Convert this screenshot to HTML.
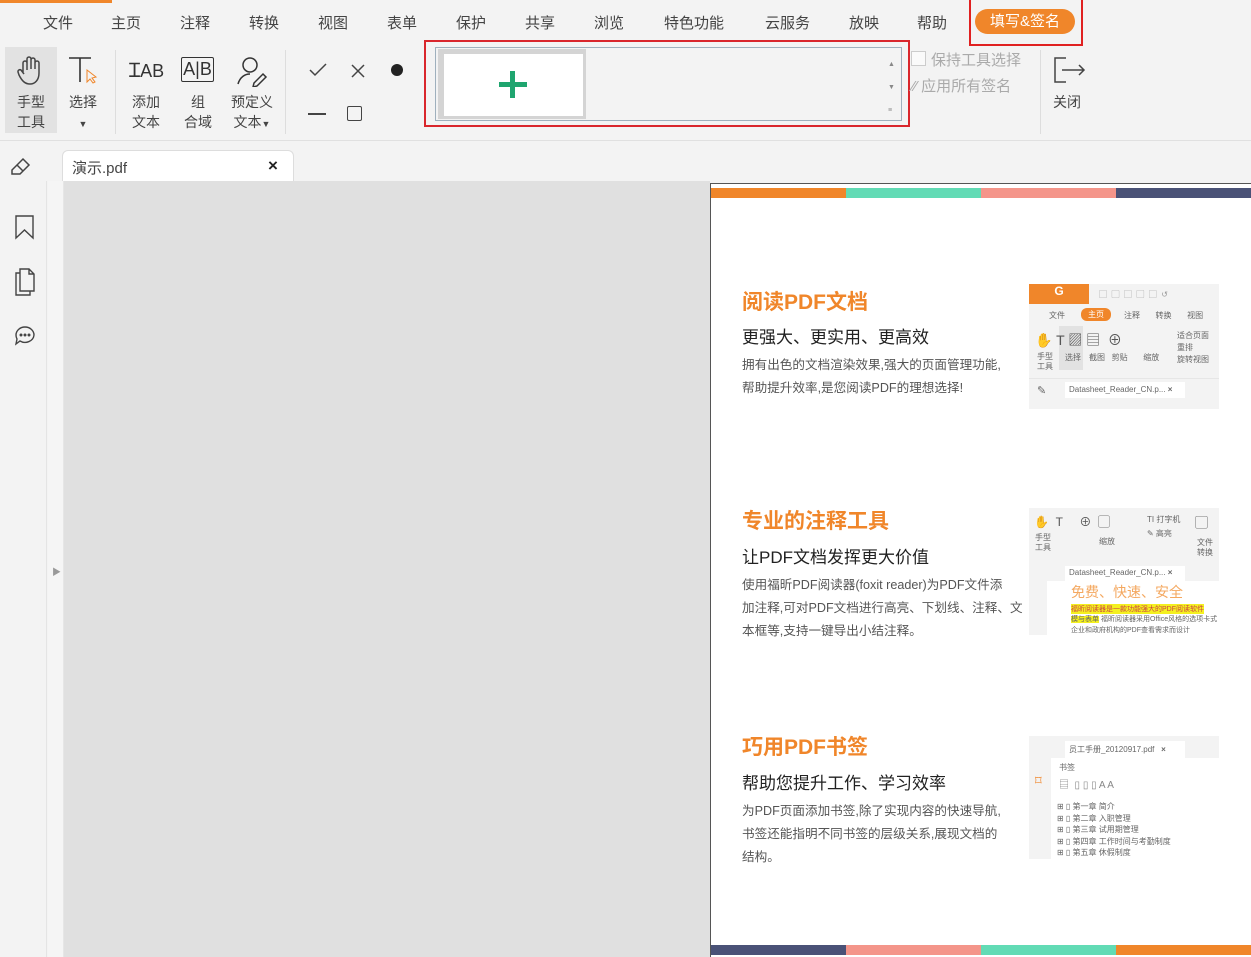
<!DOCTYPE html>
<html><head><meta charset="utf-8"><style>
*{margin:0;padding:0;box-sizing:border-box}
body{width:1251px;height:957px;overflow:hidden;background:#f3f3f3;font-family:"Liberation Sans","Noto Sans CJK SC",sans-serif;color:#333;position:relative}
.a{position:absolute}
.menu span{position:absolute;top:12px;font-size:15px;color:#444}
.lbl{position:absolute;font-size:14px;color:#444;text-align:center;line-height:20px}
.t{font-size:12.6px;color:#555;line-height:23px;white-space:nowrap}
.h{font-size:21px;font-weight:bold;color:#f0862a}
.s{font-size:17px;color:#222}
.th{position:absolute;background:#f3f3f3;font-size:8px;color:#666;overflow:hidden}
</style></head><body>
<div class="a" style="left:0;top:0;width:112px;height:3px;background:#f0862a"></div>
<div class="menu">
<span style="left:43px">文件</span><span style="left:111px">主页</span><span style="left:180px">注释</span><span style="left:249px">转换</span><span style="left:318px">视图</span><span style="left:387px">表单</span><span style="left:456px">保护</span><span style="left:525px">共享</span><span style="left:594px">浏览</span><span style="left:664px">特色功能</span><span style="left:765px">云服务</span><span style="left:849px">放映</span><span style="left:917px">帮助</span>
</div>
<div class="a" style="left:969px;top:0;width:114px;height:46px;border:2px solid #e02020;border-top:none"></div>
<div class="a" style="left:975px;top:9px;width:100px;height:25px;background:#f0862a;border-radius:13px;color:#fff;font-size:15px;text-align:center;line-height:25px">填写&amp;签名</div>
<!-- toolbar -->
<div class="a" style="left:5px;top:47px;width:52px;height:86px;background:#e2e2e2"></div>
<svg class="a" style="left:14px;top:54px" width="34" height="34" viewBox="0 0 34 34" fill="none" stroke="#444" stroke-width="1.5"><path d="M9 18V9a2 2 0 014 0v7M13 14V5a2 2 0 014 0v10M17 14V6a2 2 0 014 0v9M21 15V9a2 2 0 014 0v10c0 7-4 11-9 11s-8-3-11-9l-1-3a2 2 0 013-2l3 4"/></svg>
<div class="lbl" style="left:10px;top:92px;width:42px">手型<br>工具</div>
<svg class="a" style="left:66px;top:54px" width="34" height="34" fill="none" stroke="#333" stroke-width="1.6"><path d="M3 4h22M14 4v24"/><path d="M21 16l0 12 3-3 3 4 2-1-3-4 4-1z" stroke="#f0862a" stroke-width="1"/></svg>
<div class="lbl" style="left:62px;top:92px;width:42px">选择<br><span style="font-size:9px">▼</span></div>
<div class="a" style="left:115px;top:50px;width:1px;height:84px;background:#ddd"></div>
<div class="a" style="left:129px;top:56px;font-size:20px;color:#333">Ɪ<span style="font-size:18px">AB</span></div>
<div class="lbl" style="left:126px;top:92px;width:40px">添加<br>文本</div>
<div class="a" style="left:181px;top:57px;width:33px;height:25px;border:1.5px solid #333;border-radius:2px;font-size:18px;line-height:22px;text-align:center;color:#333">A|B</div>
<div class="lbl" style="left:178px;top:92px;width:40px">组<br>合域</div>
<svg class="a" style="left:236px;top:55px" width="36" height="32" fill="none" stroke="#333" stroke-width="1.5"><circle cx="14" cy="10" r="7"/><path d="M2 29c2-7 7-10 12-10M18 28l9-9 3 3-9 9-4 1z"/></svg>
<div class="lbl" style="left:228px;top:92px;width:48px">预定义<br>文本<span style="font-size:9px">▼</span></div>
<div class="a" style="left:285px;top:50px;width:1px;height:84px;background:#ddd"></div>
<svg class="a" style="left:308px;top:62px" width="20" height="16" fill="none" stroke="#444" stroke-width="1.5"><path d="M2 8l5 5L18 2"/></svg>
<svg class="a" style="left:350px;top:63px" width="16" height="16" fill="none" stroke="#444" stroke-width="1.5"><path d="M2 2l12 12M14 2L2 14"/></svg>
<div class="a" style="left:391px;top:64px;width:12px;height:12px;border-radius:6px;background:#222"></div>
<div class="a" style="left:308px;top:113px;width:18px;height:1.5px;background:#444"></div>
<div class="a" style="left:347px;top:106px;width:15px;height:15px;border:1.5px solid #444;border-radius:2px"></div>
<div class="a" style="left:424px;top:40px;width:486px;height:87px;border:2px solid #d9262c"></div>
<div class="a" style="left:435px;top:47px;width:467px;height:74px;border:1px solid #9fb0bd;background:#f3f3f3"></div>
<div class="a" style="left:438px;top:49px;width:148px;height:70px;background:#d4d4d4"></div>
<div class="a" style="left:444px;top:54px;width:139px;height:62px;background:#fff"></div>
<div class="a" style="left:499px;top:82px;width:28px;height:5px;background:#1fa56f"></div>
<div class="a" style="left:510px;top:71px;width:5px;height:27px;background:#1fa56f"></div>
<div class="a" style="left:888px;top:53px;font-size:7px;color:#888;line-height:23px">▲<br>▼<br>≡</div>
<div class="a" style="left:911px;top:51px;width:15px;height:15px;border:1px solid #ccc;background:#fafafa"></div>
<div class="a" style="left:931px;top:49px;font-size:15px;color:#aaa">保持工具选择</div>
<div class="a" style="left:912px;top:75px;font-size:15px;color:#aaa">⁄⁄ 应用所有签名</div>
<div class="a" style="left:1040px;top:50px;width:1px;height:84px;background:#ddd"></div>
<svg class="a" style="left:1052px;top:55px" width="34" height="30" fill="none" stroke="#444" stroke-width="1.5"><path d="M14 3H3v24h11M10 15h22M27 10l5 5-5 5"/></svg>
<div class="lbl" style="left:1046px;top:92px;width:42px">关闭</div>
<div class="a" style="left:0;top:140px;width:1251px;height:1px;background:#e0e0e0"></div>
<!-- tab row -->
<svg class="a" style="left:9px;top:155px" width="24" height="22" fill="none" stroke="#444" stroke-width="1.5"><path d="M3 15L14 4l6 6-9 9H3zM8 10l6 6"/></svg>
<div class="a" style="left:62px;top:150px;width:232px;height:32px;background:#fff;border:1px solid #ddd;border-bottom:none;border-radius:6px 6px 0 0"></div>
<div class="a" style="left:72px;top:157px;font-size:15px;color:#444">演示.pdf</div>
<div class="a" style="left:268px;top:156px;font-size:17px;color:#222;font-weight:bold">×</div>
<!-- left -->
<div class="a" style="left:0;top:181px;width:47px;height:776px;background:#f3f3f3;border-right:1px solid #e4e4e4"></div>
<div class="a" style="left:48px;top:181px;width:16px;height:776px;background:#f5f5f5;border-right:1px solid #e6e6e6"></div>
<div class="a" style="left:52px;top:565px;font-size:9px;color:#999">▶</div>
<svg class="a" style="left:13px;top:213px" width="24" height="150" fill="none" stroke="#444" stroke-width="1.4"><path d="M3 3h17v22l-8.5-8-8.5 8z"/><path d="M7 56h9l5 5v17H7zM16 56v5h5M7 60H3v22h14v-4"/><path d="M3 122a9 8 0 0118 0 9 8 0 01-14 6l-4 3 1-5a8 8 0 01-1-4z"/><circle cx="8" cy="122" r=".8" fill="#444"/><circle cx="12" cy="122" r=".8" fill="#444"/><circle cx="16" cy="122" r=".8" fill="#444"/></svg>
<div class="a" style="left:64px;top:181px;width:646px;height:776px;background:#e0e0e0"></div>
<!-- page -->
<div class="a" style="left:710px;top:183px;width:541px;height:774px;background:#fff;border-left:1px solid #555;border-top:1px solid #555"></div>
<div class="a" style="left:711px;top:188px;width:135px;height:10px;background:#f0862a"></div>
<div class="a" style="left:846px;top:188px;width:135px;height:10px;background:#62dbb5"></div>
<div class="a" style="left:981px;top:188px;width:135px;height:10px;background:#f4958a"></div>
<div class="a" style="left:1116px;top:188px;width:135px;height:10px;background:#4a5277"></div>
<div class="a" style="left:711px;top:945px;width:135px;height:10px;background:#4a5277"></div>
<div class="a" style="left:846px;top:945px;width:135px;height:10px;background:#f4958a"></div>
<div class="a" style="left:981px;top:945px;width:135px;height:10px;background:#62dbb5"></div>
<div class="a" style="left:1116px;top:945px;width:135px;height:10px;background:#f0862a"></div>

<div class="a h" style="left:742px;top:286px">阅读PDF文档</div>
<div class="a s" style="left:742px;top:323px">更强大、更实用、更高效</div>
<div class="a t" style="left:742px;top:354px">拥有出色的文档渲染效果,强大的页面管理功能,<br>帮助提升效率,是您阅读PDF的理想选择!</div>

<div class="a h" style="left:742px;top:505px">专业的注释工具</div>
<div class="a s" style="left:742px;top:543px">让PDF文档发挥更大价值</div>
<div class="a t" style="left:742px;top:574px">使用福昕PDF阅读器(foxit reader)为PDF文件添<br>加注释,可对PDF文档进行高亮、下划线、注释、文<br>本框等,支持一键导出小结注释。</div>

<div class="a h" style="left:742px;top:731px">巧用PDF书签</div>
<div class="a s" style="left:742px;top:769px">帮助您提升工作、学习效率</div>
<div class="a t" style="left:742px;top:800px">为PDF页面添加书签,除了实现内容的快速导航,<br>书签还能指明不同书签的层级关系,展现文档的<br>结构。</div>

<!-- thumb 1 -->
<div class="th" style="left:1029px;top:284px;width:190px;height:125px">
<div class="a" style="left:0;top:0;width:60px;height:20px;background:#f0862a;color:#fff;text-align:center;font-weight:bold;font-size:12px">G</div>
<div class="a" style="left:70px;top:5px;color:#999">▢ &nbsp;▢ &nbsp;▢ &nbsp;▢ &nbsp;▢ &nbsp;↺</div>
<div class="a" style="left:20px;top:26px">文件</div>
<div class="a" style="left:52px;top:24px;background:#f0862a;color:#fff;border-radius:6px;padding:1px 7px">主页</div>
<div class="a" style="left:95px;top:26px">注释 &nbsp; &nbsp; &nbsp; 转换 &nbsp; &nbsp; &nbsp; 视图</div>
<div class="a" style="left:30px;top:42px;width:24px;height:44px;background:#e2e2e2"></div>
<div class="a" style="left:6px;top:46px;font-size:14px;color:#555">✋ T ▨ ▤ &nbsp;⊕</div>
<div class="a" style="left:8px;top:68px;line-height:10px">手型<br>工具</div>
<div class="a" style="left:36px;top:68px">选择</div>
<div class="a" style="left:60px;top:68px">截图 &nbsp; 剪贴 &nbsp; &nbsp; &nbsp; 缩放</div>
<div class="a" style="left:148px;top:46px;line-height:12px">适合页面<br>重排<br>旋转视图</div>
<div class="a" style="left:0;top:94px;width:190px;height:31px;background:#f3f3f3;border-top:1px solid #e6e6e6"></div>
<div class="a" style="left:36px;top:98px;width:120px;height:16px;background:#fff;padding:3px 4px">Datasheet_Reader_CN.p... <b>×</b></div>
<div class="a" style="left:8px;top:100px;font-size:11px">✎</div>
</div>
<!-- thumb 2 -->
<div class="th" style="left:1029px;top:508px;width:190px;height:127px;background:#fff">
<div class="a" style="left:0;top:0;width:190px;height:55px;background:#f3f3f3"></div>
<div class="a" style="left:5px;top:5px;font-size:12px;color:#555">✋ &nbsp;T &nbsp; &nbsp; ⊕ &nbsp;▢</div>
<div class="a" style="left:118px;top:6px">TI 打字机</div>
<div class="a" style="left:166px;top:4px;font-size:13px;color:#555">▢</div>
<div class="a" style="left:6px;top:25px;line-height:10px">手型<br>工具</div>
<div class="a" style="left:118px;top:20px">✎ 高亮</div>
<div class="a" style="left:70px;top:28px">缩放</div>
<div class="a" style="left:168px;top:30px;line-height:10px">文件<br>转换</div>
<div class="a" style="left:0;top:55px;width:190px;height:18px;background:#f3f3f3"></div>
<div class="a" style="left:36px;top:58px;width:120px;height:15px;background:#fff;padding:2px 4px">Datasheet_Reader_CN.p... <b>×</b></div>
<div class="a" style="left:0;top:73px;width:18px;height:54px;background:#f3f3f3"></div>
<div class="a" style="left:42px;top:74px;font-size:14px;color:#f4a860">免费、快速、安全</div>
<div class="a" style="left:42px;top:96px;background:#f4f020;font-size:7px;color:#c44">福昕阅读器是一款功能强大的PDF阅读软件</div>
<div class="a" style="left:42px;top:106px;font-size:7px"><span style="background:#f4f020">模与表单</span> 福昕阅读器采用Office风格的选项卡式</div>
<div class="a" style="left:42px;top:117px;font-size:7px">企业和政府机构的PDF查看需求而设计</div>
</div>
<!-- thumb 3 -->
<div class="th" style="left:1029px;top:736px;width:190px;height:123px;background:#fff">
<div class="a" style="left:0;top:0;width:190px;height:22px;background:#f3f3f3"></div>
<div class="a" style="left:36px;top:5px;width:120px;height:17px;background:#fff;padding:3px 4px">员工手册_20120917.pdf &nbsp; <b>×</b></div>
<div class="a" style="left:0;top:22px;width:22px;height:101px;background:#f3f3f3"></div>
<div class="a" style="left:30px;top:26px">书签</div>
<div class="a" style="left:30px;top:40px;font-size:10px;color:#888">▤ &nbsp;▯ ▯ ▯ A A</div>
<div class="a" style="left:28px;top:65px;line-height:11.5px">⊞ ▯ 第一章 简介<br>⊞ ▯ 第二章 入职管理<br>⊞ ▯ 第三章 试用期管理<br>⊞ ▯ 第四章 工作时间与考勤制度<br>⊞ ▯ 第五章 休假制度</div>
<div class="a" style="left:6px;top:37px;font-size:13px;color:#f0862a">⌑</div>
</div>
</body></html>
